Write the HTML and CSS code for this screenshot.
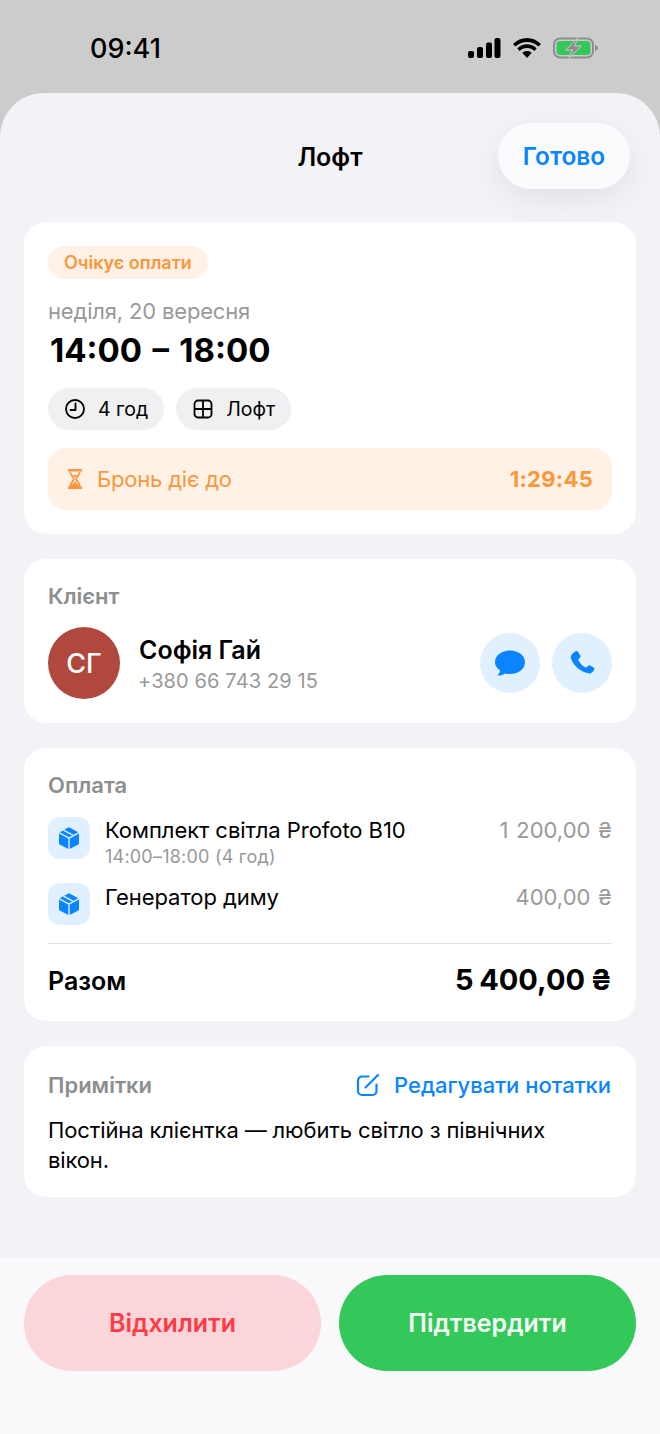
FILE: index.html
```html
<!DOCTYPE html>
<html lang="uk">
<head>
<meta charset="utf-8">
<title>Лофт</title>
<link rel="stylesheet" href="styles.css">
</head>
<body>
<div class="screen">
  <header class="status">
    <span class="clock">09:41</span>
    <div class="status-icons">
      <svg class="signal" width="34" height="22" viewBox="0 0 34 22"><rect x="1" y="14" width="6" height="7" rx="2"/><rect x="10" y="10" width="6" height="11" rx="2"/><rect x="19" y="5.500" width="6" height="15.500" rx="2"/><rect x="27.500" y="1" width="6" height="20" rx="2"/></svg>
      <svg class="wifi" width="28" height="22" viewBox="1.300 1.500 25.400 20"><path d="M14 6c4.200 0 7.700 1.500 10.500 4.200l2.200-2.300A18.400 18.400 0 0 0 14 2.500 18.400 18.400 0 0 0 1.300 7.900l2.200 2.300C6.300 7.500 9.800 6 14 6z"/><path d="M14 11.500c2.700 0 4.900 1 6.700 2.700l2.100-2.300A12.900 12.900 0 0 0 14 8.200a12.900 12.900 0 0 0-8.800 3.700l2.100 2.300c1.800-1.700 4-2.700 6.700-2.700z"/><path d="M14 14.200c-1.700 0-3.100.6-4.300 1.700L14 20.500l4.300-4.600c-1.200-1.100-2.600-1.700-4.300-1.700z"/></svg>
      <svg class="battery" width="46" height="22" viewBox="0 0 46 22"><rect x="1" y="1.500" width="39" height="19" rx="6" fill="none" stroke="#8e8e8e" stroke-width="2"/><rect x="3.500" y="4" width="34" height="14" rx="3.500" fill="#34c759"/><path d="M42 8v6c1.800-.4 3-1.500 3-3s-1.200-2.600-3-3z" fill="#8e8e8e"/><path d="M25 .8 12.500 13h7L16 21.200 28.500 9h-7z" fill="#8e8e8e" stroke="#ccc" stroke-width="1" stroke-linejoin="round"/></svg>
    </div>
  </header>

  <main class="sheet">
    <div class="nav">
      <h1 class="nav-title">Лофт</h1>
      <button class="done">Готово</button>
    </div>

    <div class="cards">
      <section class="card card-booking">
        <span class="badge">Очікує оплати</span>
        <p class="date">неділя, 20 вересня</p>
        <p class="time">14:00 – 18:00</p>
        <div class="chips">
          <span class="chip">
            <svg width="22" height="22" viewBox="0 0 22 22" fill="none" stroke="#000" stroke-width="1.800"><circle cx="11" cy="11" r="9"/><path d="M11.500 5.500V12H6.500" stroke-linecap="round" stroke-linejoin="round"/></svg>
            4 год
          </span>
          <span class="chip">
            <svg width="22" height="22" viewBox="0 0 22 22" fill="none" stroke="#000" stroke-width="1.800"><rect x="2.500" y="2.500" width="17" height="17" rx="3.500"/><path d="M11 2.500v17M2.500 11h17"/></svg>
            Лофт
          </span>
        </div>
        <div class="hold">
          <span class="hold-label">
            <svg width="18" height="22" viewBox="0 0 18 22"><path d="M2 1h14v2.600H2zM2 18.400h14V21H2z" fill="#f9973c"/><path d="M4.200 3.500c0 4 3.600 5.200 3.600 7.500s-3.600 3.500-3.600 7.500h9.600c0-4-3.600-5.200-3.600-7.500s3.600-3.500 3.600-7.500" fill="none" stroke="#f9973c" stroke-width="1.800"/><path d="M9 13.500c1 1.500 3.600 2.500 4 5H5c.4-2.500 3-3.500 4-5zM6.800 7h4.400L9 9.500z" fill="#f9973c"/></svg>
            Бронь діє до
          </span>
          <span class="hold-timer">1:29:45</span>
        </div>
      </section>

      <section class="card card-client">
        <h2 class="card-title">Клієнт</h2>
        <div class="client">
          <div class="avatar">СГ</div>
          <div class="client-info">
            <p class="client-name">Софія Гай</p>
            <p class="client-phone">+380 66 743 29 15</p>
          </div>
          <div class="actions">
            <button class="round">
              <svg width="32" height="28" viewBox="0 0 32 28"><path d="M16 1.500c8.300 0 15 5 15 11.700s-6.700 11.800-15 11.800c-1.700 0-3.300-.2-4.800-.6-1.900 1.400-5 2.300-8 2.100 1.500-1.300 2.600-3.100 2.900-5C2.900 19.400 1 16.500 1 13.200 1 6.500 7.700 1.500 16 1.500z" fill="#0a84ff"/></svg>
            </button>
            <button class="round">
              <svg width="26" height="26" viewBox="0 0 26 26"><path d="M6.800 1.200c.7-.4 1.600-.2 2.100.5l2.400 3.800c.4.700.3 1.500-.2 2.100l-1.500 1.500c-.3.300-.3.700-.1 1.100 1.600 3.300 3.900 5.700 7.100 7.200.4.200.8.100 1.100-.2l1.400-1.400c.6-.6 1.400-.7 2.100-.3l3.400 2c.8.500 1.100 1.400.6 2.200-1.200 2.300-3.100 4.100-5.700 3.600C10.800 21.600 4.200 15 1.800 8.300c-.8-3 2.400-5.700 5-7.100z" fill="#0a84ff"/></svg>
            </button>
          </div>
        </div>
      </section>

      <section class="card card-pay">
        <h2 class="card-title">Оплата</h2>
        <div class="line line-first">
          <div class="box-icon">
            <svg width="22" height="22" viewBox="0 0 22 22"><path d="M10.400.6 1.700 5.300 11 10.300l9.300-5L11.600.6a1.300 1.300 0 0 0-1.200 0z" fill="#0a84ff"/><path d="M1 6.500v9.800c0 .5.300.9.700 1.100l8.600 4.500V11.500zM21 6.500v9.800c0 .5-.3.900-.7 1.100l-8.600 4.500V11.500z" fill="#0a84ff"/><path d="m5.500 3.200 9.400 5" stroke="#e0f0ff" stroke-width="1.400"/></svg>
          </div>
          <div class="line-text">
            <p class="line-name">Комплект світла Profoto B10</p>
            <p class="line-sub">14:00–18:00 (4 год)</p>
          </div>
          <span class="line-price">1 200,00 ₴</span>
        </div>
        <div class="line">
          <div class="box-icon">
            <svg width="22" height="22" viewBox="0 0 22 22"><path d="M10.400.6 1.700 5.300 11 10.300l9.300-5L11.600.6a1.300 1.300 0 0 0-1.200 0z" fill="#0a84ff"/><path d="M1 6.500v9.800c0 .5.300.9.700 1.100l8.600 4.500V11.500zM21 6.500v9.800c0 .5-.3.900-.7 1.100l-8.600 4.500V11.500z" fill="#0a84ff"/><path d="m5.500 3.200 9.400 5" stroke="#e0f0ff" stroke-width="1.400"/></svg>
          </div>
          <div class="line-text">
            <p class="line-name">Генератор диму</p>
          </div>
          <span class="line-price">400,00 ₴</span>
        </div>
        <div class="total">
          <span class="total-label">Разом</span>
          <span class="total-value">5 400,00 ₴</span>
        </div>
      </section>

      <section class="card card-notes">
        <div class="notes-head">
          <h2 class="card-title">Примітки</h2>
          <span class="edit">
            <svg width="24" height="24" viewBox="0 0 24 24" fill="none" stroke="#0a84ff" stroke-width="2.200" stroke-linecap="round" stroke-linejoin="round"><path d="M12.500 3.500H6a4 4 0 0 0-4 4V18a4 4 0 0 0 4 4h10.500a4 4 0 0 0 4-4v-6.500"/><path d="M9.500 14.500 22 2"/></svg>
            Редагувати нотатки
          </span>
        </div>
        <p class="notes-text">Постійна клієнтка — любить світло з північних вікон.</p>
      </section>
    </div>

    <footer class="footer">
      <button class="cta cta-reject">Відхилити</button>
      <button class="cta cta-confirm">Підтвердити</button>
    </footer>
  </main>
</div>
</body>
</html>
```
FILE: styles.css
```css
* { box-sizing: border-box; margin: 0; padding: 0; }
html, body { height: 100%; }
body {
  font-family: Inter, "Liberation Sans", sans-serif;
  background: #cccccc;
  color: #000;
}
button { font: inherit; border: 0; background: none; }
.screen { width: 660px; height: 1434px; display: flex; flex-direction: column; overflow: hidden; }

.status {
  height: 93px; flex: none;
  display: flex; justify-content: space-between; align-items: flex-start;
  padding: 32px 61px 0 90px;
}
.clock { font-size: 27px; line-height: 33px; font-weight: 500; }
.status-icons { display: flex; align-items: center; gap: 12px; padding-top: 5px; }
.status-icons svg { display: block; }
.signal, .wifi { fill: #000; }

.sheet {
  flex: 1;
  background: #f2f2f7;
  border-radius: 44px 44px 0 0;
  display: flex; flex-direction: column;
  min-height: 0;
}
.nav { position: relative; height: 96px; flex: none; padding-top: 30px; display: flex; justify-content: flex-end; padding-right: 30px; }
.nav-title {
  position: absolute; left: 0; right: 0; top: 48px;
  text-align: center; font-size: 25px; line-height: 32px; font-weight: 600;
}
.done {
  width: 132px; height: 66px; border-radius: 33px;
  background: #fbfbfe; color: #0a84ff;
  font-size: 24.400px; font-weight: 600;
  box-shadow: 0 10px 30px rgba(0, 0, 0, .07);
}

.cards { padding: 33px 24px 0; display: flex; flex-direction: column; gap: 25px; }
.card { background: #fff; border-radius: 22px; padding: 24px; }
.card-title { font-size: 22px; line-height: 26px; font-weight: 600; color: #8e8e8e; }
.card-client .card-title, .card-pay .card-title { margin-top: -1px; }

.card-booking { height: 312px; }
.badge {
  display: inline-block; height: 33px; padding: 0 16px;
  background: #fff1e5; border-radius: 17px;
  color: #f9973c; font-size: 18px; line-height: 33px; font-weight: 600;
}
.date { margin-top: 18px; font-size: 22px; line-height: 28px; color: #999; letter-spacing: -.17px; }
.time { margin-top: 5px; margin-left: 2px; font-size: 33px; line-height: 41px; font-weight: 700; word-spacing: 2.500px; }
.chips { display: flex; gap: 12px; margin-top: 17px; }
.chip {
  display: flex; align-items: center; gap: 12px;
  height: 42px; padding: 0 16px;
  background: #f0f0f2; border-radius: 21px;
  font-size: 19.500px; font-weight: 400;
}
.hold {
  margin-top: 18px; height: 62px; padding: 0 19px 0 18px;
  display: flex; align-items: center; justify-content: space-between;
  background: #fff1e5; border-radius: 18px;
  color: #f9973c;
}
.hold-label { display: flex; align-items: center; gap: 13px; font-size: 22px; letter-spacing: -.2px; }
.hold-timer { font-size: 22px; font-weight: 700; letter-spacing: .3px; }

.card-client { height: 164px; padding-top: 25px; }
.client { display: flex; align-items: center; margin-top: 18px; }
.avatar {
  width: 72px; height: 72px; border-radius: 50%;
  background: #b0483e; color: #fff;
  display: flex; align-items: center; justify-content: center;
  font-size: 27px; font-weight: 500; flex: none;
}
.client-info { margin-left: 19px; flex: 1; }
.client-name { font-size: 25px; line-height: 32px; font-weight: 600; margin-top: 2px; }
.client-phone { font-size: 20px; line-height: 26px; color: #999; margin-top: 2px; margin-left: -1px; letter-spacing: .12px; }
.actions { display: flex; gap: 12px; }
.round {
  width: 60px; height: 60px; border-radius: 50%;
  background: #e0f0ff;
  display: flex; align-items: center; justify-content: center;
}

.card-pay { height: 273px; padding-top: 25px; }
.line { display: flex; align-items: flex-start; margin-top: 16px; }
.line-first { margin-top: 19px; height: 50px; }
.box-icon {
  width: 42px; height: 42px; border-radius: 12px;
  background: #e0f0ff; flex: none;
  display: flex; align-items: center; justify-content: center;
}
.line-text { margin-left: 15px; flex: 1; }
.line-name { font-size: 22px; line-height: 28px; letter-spacing: -.05px; }
.line-first .line-name { margin-top: -1px; }
.line-sub { font-size: 18px; line-height: 22px; color: #999; margin-top: 2px; letter-spacing: .22px; }
.line-price { font-size: 22px; line-height: 28px; color: #999; word-spacing: 1.500px; }
.line-first .line-price { margin-top: -1px; }
.total {
  margin-top: 18px; padding-top: 17px;
  border-top: 1px solid #e2e2e6;
  display: flex; justify-content: space-between; align-items: baseline;
}
.total-label { font-size: 25px; line-height: 38px; font-weight: 600; }
.total-value { font-size: 29px; line-height: 38px; font-weight: 700; word-spacing: -1.300px; }

.card-notes { height: 151px; padding-top: 26px; }
.notes-head { display: flex; justify-content: space-between; align-items: center; }
.edit { display: flex; align-items: center; gap: 14px; color: #0a84ff; font-size: 22px; font-weight: 500; line-height: 26px; padding-right: 1px; }
.notes-text { margin-top: 17px; font-size: 22px; line-height: 30px; letter-spacing: -.13px; }

.footer {
  margin-top: auto; height: 177px; flex: none;
  background: #f9f9fc;
  padding: 18px 24px 0;
  display: flex; gap: 18px; align-items: flex-start;
}
.cta { flex: 1; height: 96px; border-radius: 48px; font-size: 25px; font-weight: 600; }
.cta-reject { background: #fad5d9; color: #ff3b47; }
.cta-confirm { background: #34c759; color: #f4fff7; }
```
